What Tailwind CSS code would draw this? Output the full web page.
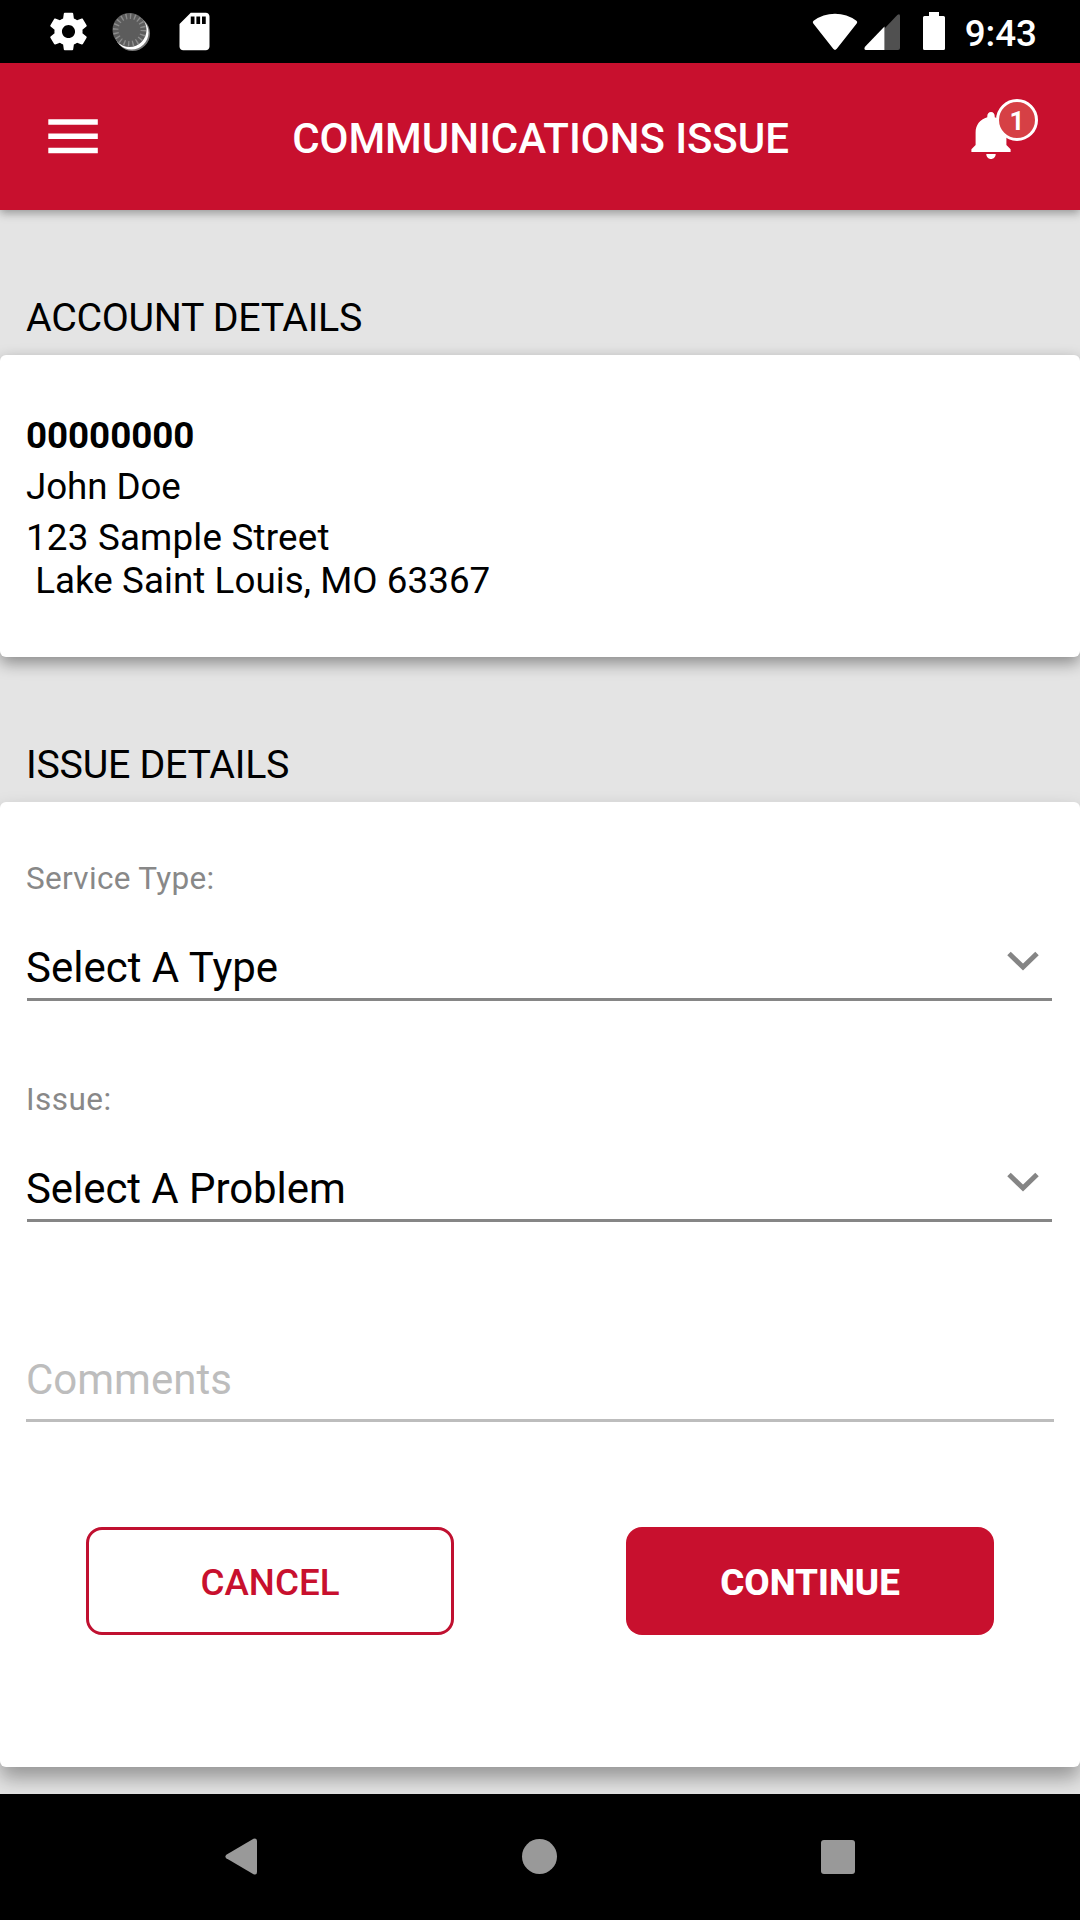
<!DOCTYPE html>
<html lang="en">

<head>
  <meta charset="UTF-8" />
  <meta name="viewport" content="width=device-width, initial-scale=1.0" />
  <title>Communications Issue</title>
  <script src="https://cdn.jsdelivr.net/npm/@tailwindcss/browser@4"></script>
</head>

<body class="bg-[#e4e4e4] font-[Roboto,sans-serif] text-black">
  <div class="flex flex-col w-[1080px] h-[1920px] overflow-hidden">
    <!-- Status bar -->
    <div class="flex shrink-0 items-center justify-between h-[63px] bg-black pl-[46px] pr-[43px] text-white">
      <div class="flex items-center">
        <svg class="w-[45px] h-[45px]" viewBox="0 0 24 24" fill="currentColor">
          <path d="M19.43 12.98c.04-.32.07-.64.07-.98s-.03-.66-.07-.98l2.11-1.65c.19-.15.24-.42.12-.64l-2-3.46c-.12-.22-.39-.3-.61-.22l-2.49 1c-.52-.4-1.08-.73-1.69-.98l-.38-2.65C14.46 2.18 14.25 2 14 2h-4c-.25 0-.46.18-.49.42l-.38 2.65c-.61.25-1.17.59-1.69.98l-2.49-1c-.23-.09-.49 0-.61.22l-2 3.46c-.13.22-.07.49.12.64l2.11 1.65c-.04.32-.07.65-.07.98s.03.66.07.98l-2.11 1.65c-.19.15-.24.42-.12.64l2 3.46c.12.22.39.3.61.22l2.49-1c.52.4 1.08.73 1.69.98l.38 2.65c.03.24.24.42.49.42h4c.25 0 .46-.18.49-.42l.38-2.65c.61-.25 1.17-.59 1.69-.98l2.49 1c.23.09.49 0 .61-.22l2-3.46c.12-.22.07-.49-.12-.64l-2.110-1.65zM12 15.5c-1.93 0-3.5-1.57-3.5-3.5s1.57-3.5 3.5-3.5 3.5 1.57 3.5 3.5-1.57 3.5-3.5 3.5z" />
        </svg>
        <svg class="w-10 h-10 ml-5" viewBox="0 0 40 40">
          <circle cx="21.5" cy="21.5" r="17.5" fill="#777" />
          <circle cx="20.5" cy="20.5" r="17" fill="#fff" />
          <circle cx="18.5" cy="18" r="17" fill="#5c5c5c" />
          <circle cx="18.5" cy="18" r="13.8" fill="none" stroke="#8c8c8c" stroke-width="5.5" stroke-dasharray="1.4 2.935" />
        </svg>
        <svg class="w-[45px] h-[45px] ml-[21px]" viewBox="0 0 24 24" fill="currentColor">
          <path d="M18 2h-8L4.02 8 4 20c0 1.1.9 2 2 2h12c1.1 0 2-.9 2-2V4c0-1.100-.9-2-2-2zm-6 6h-2V4h2v4zm3 0h-2V4h2v4zm3 0h-2V4h2v4z" />
        </svg>
      </div>
      <div class="flex items-center">
        <svg class="w-[46px] h-[38px]" viewBox="0 0 46 38" fill="currentColor">
          <path d="M1.300 10.500Q0 9 1.600 7.800Q11 .8 23 .8T44.400 7.800Q46 9 44.700 10.500L24.800 35.800Q23 38 21.200 35.800Z" />
        </svg>
        <svg class="w-9 h-9 ml-[6px]" viewBox="0 0 36 36" fill="currentColor">
          <path d="M36 2v32q0 2-2 2H20.500V14.500L33.300 1Q36-1 36 2Z" fill="#505050" />
          <path d="M20.500 12.500V36H2Q-.5 36 1 32.800Z" />
        </svg>
        <svg class="w-[22px] h-[38px] ml-[23px] mt-[-1px]" viewBox="0 0 22 38" fill="currentColor">
          <path d="M6 0h10v4h4.500q1.500 0 1.500 1.500v31q0 1.500-1.500 1.500h-19Q0 38 0 36.500v-31Q0 4 1.500 4H6z" />
        </svg>
        <span class="ml-5 mt-[3px] text-[36.75px] leading-[43px] font-medium">9:43</span>
      </div>
    </div>

    <!-- Header -->
    <header class="relative z-10 flex shrink-0 items-center justify-between h-[147px] bg-[#c8102e] pl-12 pr-[41px] text-white shadow-[0_3px_9px_rgba(0,0,0,0.35)]">
      <svg class="w-[50px] h-[35px] mr-[12px]" viewBox="0 0 50 35" fill="currentColor">
        <path d="M0.300 0.300h49.500v5.500H0.300zM0.300 14.600h49.500v5.500H0.300zM0.300 28.800h49.500v5.500H0.300z" />
      </svg>
      <h1 class="mt-[4px] text-[42px] leading-[49px] font-medium tracking-[-0.05px]">COMMUNICATIONS ISSUE</h1>
      <div class="relative w-[68px] h-[60px] mt-[-15px]">
        <svg class="absolute left-[0px] top-[13px] w-[40px] h-[48px]" viewBox="0 0 40 48" fill="currentColor">
          <path d="M20 0c-2.300 0-3.700 1.700-3.700 4v1.300C9 7.200 4.600 13.200 4.600 20.500V33L.4 37.300V40h39.200v-2.700L35.400 33V20.500C35.400 13.200 31 7.200 23.700 5.300V4C23.700 1.700 22.300 0 20 0zM15.300 42h9.400c0 2.800-2 5-4.700 5s-4.700-2.200-4.700-5z" />
        </svg>
        <span class="absolute left-[25px] top-[0px] flex items-center justify-center w-[42px] h-[42px] rounded-full border-[3px] border-white bg-[#d64045] pt-[2px] text-[26px] leading-[30px] font-bold">1</span>
      </div>
    </header>

    <!-- Content -->
    <main class="flex flex-col h-[1584px]">
      <h2 class="px-[26px] pt-[85px] pb-[14px] text-[39.375px] leading-[46px] tracking-[-0.32px]">ACCOUNT DETAILS</h2>
      <section class="shrink-0 h-[302px] rounded-[6px] bg-white px-[26px] pt-[59px] text-[36.75px] leading-[43px] shadow-[0_6px_16px_rgba(0,0,0,0.4)]">
        <p class="font-bold tracking-[-0.05px]">00000000</p>
        <p class="mt-2 tracking-[-0.1px]">John Doe</p>
        <p class="mt-2"><span class="tracking-[0.2px]">123 Sample Street</span><br><span class="tracking-[0.05px]">&nbsp;Lake Saint Louis, MO 63367</span></p>
      </section>

      <h2 class="px-[26px] pt-[85px] pb-[14px] text-[39.375px] leading-[46px] tracking-[-0.26px]">ISSUE DETAILS</h2>
      <section class="shrink-0 h-[965px] rounded-[6px] bg-white px-[26px] pt-[58px] shadow-[0_11px_20px_rgba(0,0,0,0.35)]">
        <p class="text-[31.5px] leading-[37px] tracking-[0.33px] text-[#888]">Service Type:</p>
        <div class="flex justify-between mt-[46px] ml-[1px] mr-[2px] pb-[6px] border-b-[3px] border-[#868686]">
          <span class="ml-[-1px] text-[42px] leading-[49px]">Select A Type</span>
          <svg class="w-8 h-5 mt-[8px] mr-[13px]" viewBox="0 0 32 20" fill="none" stroke="#858585" stroke-width="5">
            <path d="M2 2.500L16 16L30 2.500" />
          </svg>
        </div>

        <p class="mt-20 text-[31.5px] leading-[37px] tracking-[0.45px] text-[#888]">Issue:</p>
        <div class="flex justify-between mt-[46px] ml-[1px] mr-[2px] pb-[6px] border-b-[3px] border-[#868686]">
          <span class="ml-[-1px] text-[42px] leading-[49px] tracking-[-0.07px]">Select A Problem</span>
          <svg class="w-8 h-5 mt-[8px] mr-[13px]" viewBox="0 0 32 20" fill="none" stroke="#858585" stroke-width="5">
            <path d="M2 2.500L16 16L30 2.500" />
          </svg>
        </div>

        <p class="mt-[133px] pb-[15px] border-b-[3px] border-[#bdbdbd] text-[42px] leading-[49px] text-[#bdbdbd]">Comments</p>

        <div class="flex justify-between mt-[105px] px-[60px] text-[36.75px] leading-[43px]">
          <button class="w-[368px] h-[108px] rounded-2xl border-[3px] border-[#c01030] pt-[2px] font-medium text-[#c8102e]">CANCEL</button>
          <button class="w-[368px] h-[108px] rounded-2xl bg-[#c8102e] pt-[2px] font-extrabold text-white">CONTINUE</button>
        </div>
      </section>
    </main>

    <!-- Navigation bar -->
    <nav class="relative z-10 flex shrink-0 items-center justify-between h-[126px] bg-black px-[225px] pb-[1px]">
      <svg class="w-8 h-[37px]" viewBox="0 0 32 37" fill="#999">
        <path d="M1.300 16.700Q-.5 18.500 1.300 20.300L28.500 36.300Q32 37.500 32 34V3Q32-.5 28.500.7Z" />
      </svg>
      <div class="w-[35px] h-[35px] mr-[-1px] rounded-full bg-[#999]"></div>
      <div class="w-[34px] h-[34px] rounded-[3px] bg-[#999]"></div>
    </nav>
  </div>
</body>

</html>
